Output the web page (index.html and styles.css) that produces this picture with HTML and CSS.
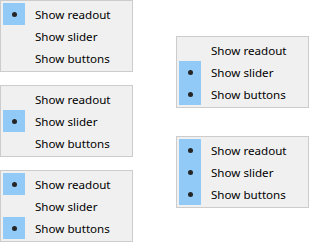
FILE: index.html
```html
<!DOCTYPE html>
<html lang="en">

<head>
    <meta charset="UTF-8">
    <meta name="viewport" content="width=device-width, initial-scale=1.0">
    <title>Menus</title>
    <link rel="stylesheet" href="styles.css">
</head>

<body>
    <div class="page">
        <div class="col">
            <div class="menu">
                <div class="item on"><span class="check"></span><span class="label">Show readout</span></div>
                <div class="item"><span class="check"></span><span class="label">Show slider</span></div>
                <div class="item"><span class="check"></span><span class="label">Show buttons</span></div>
            </div>
            <div class="menu">
                <div class="item"><span class="check"></span><span class="label">Show readout</span></div>
                <div class="item on"><span class="check"></span><span class="label">Show slider</span></div>
                <div class="item"><span class="check"></span><span class="label">Show buttons</span></div>
            </div>
            <div class="menu">
                <div class="item on"><span class="check"></span><span class="label">Show readout</span></div>
                <div class="item"><span class="check"></span><span class="label">Show slider</span></div>
                <div class="item on"><span class="check"></span><span class="label">Show buttons</span></div>
            </div>
        </div>
        <div class="col col-right">
            <div class="menu">
                <div class="item"><span class="check"></span><span class="label">Show readout</span></div>
                <div class="item on"><span class="check"></span><span class="label">Show slider</span></div>
                <div class="item on"><span class="check"></span><span class="label">Show buttons</span></div>
            </div>
            <div class="menu">
                <div class="item on"><span class="check"></span><span class="label">Show readout</span></div>
                <div class="item on"><span class="check"></span><span class="label">Show slider</span></div>
                <div class="item on"><span class="check"></span><span class="label">Show buttons</span></div>
            </div>
        </div>
    </div>
</body>

</html>
```

FILE: styles.css
```css
body {
    margin: 0;
    background: #fff;
    font-family: "Noto Sans", "Open Sans", sans-serif;
    font-size: 11.6px;
    color: #000;
}

.page {
    display: flex;
    gap: 43px;
}

.col {
    display: flex;
    flex-direction: column;
    gap: 13px;
}

.col-right {
    padding-top: 36px;
    gap: 28px;
}

.menu {
    width: 127px;
    padding: 2px;
    border: 1px solid #cccccc;
    background: #f0f0f0;
}

.item {
    display: flex;
    align-items: center;
    height: 22px;
}

.check {
    width: 22px;
    height: 22px;
    display: flex;
    align-items: center;
    justify-content: center;
    flex-shrink: 0;
}

.item.on .check {
    background: #91c9f7;
}

.item.on .check::before {
    content: "";
    width: 5px;
    height: 5px;
    border-radius: 50%;
    background: #252525;
}

.label {
    margin-left: 10px;
    padding-top: 1px;
    line-height: 21px;
    white-space: nowrap;
}
```
